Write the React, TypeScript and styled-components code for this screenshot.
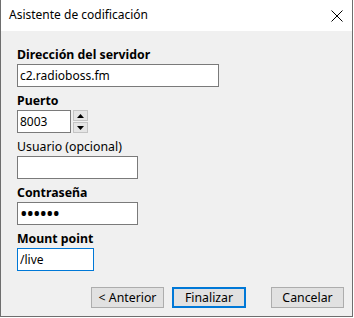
import React from "react";
import styled, { createGlobalStyle } from "styled-components";

const Global = createGlobalStyle`
  html, body { margin: 0; padding: 0; background: #ffffff; }
  body { font-family: "Noto Sans", "Open Sans", sans-serif; font-size: 12px; color: #000; }
  * { box-sizing: border-box; }
`;

const Window = styled.div`
  width: 353px;
  height: 317px;
  border: 1px solid #6e6e6e;
  border-top: none;
  background: #f0f0f0;
  display: flex;
  flex-direction: column;
`;

const TitleBar = styled.div`
  height: 31px;
  background: #ffffff;
  display: flex;
  align-items: center;
  justify-content: space-between;
  padding: 0 7px 0 8px;
`;

const Title = styled.span`
  font-size: 12px;
  color: #000;
  line-height: 16px;
  margin-top: -1px;
`;

const Close = styled.div`
  width: 14px;
  height: 14px;
  display: flex;
  align-items: center;
  justify-content: center;
  margin-right: 1px;
`;

const Body = styled.div`
  flex: 1;
  display: flex;
  flex-direction: column;
  padding: 16px 8px 0 16px;
`;

const Field = styled.div`
  display: flex;
  flex-direction: column;
  margin-bottom: 6px;
`;

const Label = styled.label<{ $bold?: boolean }>`
  font-weight: ${(p) => (p.$bold ? 700 : 400)};
  font-size: 12.3px;
  line-height: 16px;
  height: 16px;
  margin-bottom: 1px;
  white-space: nowrap;
`;

const Input = styled.input<{ $w: number; $focused?: boolean; $pw?: boolean }>`
  width: ${(p) => p.$w}px;
  height: 23px;
  border: 1px solid ${(p) => (p.$focused ? "#0078d7" : "#7a7a7a")};
  background: #fff;
  font-family: "Noto Sans", "Open Sans", sans-serif;
  font-size: ${(p) => (p.$pw ? "20px" : "12px")};
  letter-spacing: ${(p) => (p.$pw ? "-1px" : "0")};
  padding: 0 2px;
  margin: 0;
  outline: none;
  color: #000;
`;

const SpinRow = styled.div`
  display: flex;
  gap: 1px;
`;

const Spin = styled.div`
  display: flex;
  flex-direction: column;
  gap: 1px;
  margin-left: 1px;
`;

const SpinButton = styled.div`
  width: 15px;
  height: 11px;
  background: #e5e5e5;
  border: 1px solid #c4c4c4;
  display: flex;
  align-items: center;
  justify-content: center;
`;

const Buttons = styled.div`
  display: flex;
  justify-content: flex-end;
  margin-top: 10px;
`;

const Button = styled.button<{ $primary?: boolean; $gap: number }>`
  width: ${(p) => (p.$primary ? 74 : 73)}px;
  height: 21px;
  margin-left: ${(p) => p.$gap}px;
  background: #e1e1e1;
  border: ${(p) => (p.$primary ? "2px solid #0078d7" : "1px solid #adadad")};
  font-family: "Noto Sans", "Open Sans", sans-serif;
  font-size: 12.3px;
  color: #000;
  padding: 0;
  line-height: 16px;
`;

const Triangle = ({ up }: { up?: boolean }) => (
  <svg width="7" height="4" viewBox="0 0 7 4">
    <path d={up ? "M0 4 L3.5 0 L7 4 Z" : "M0 0 L3.5 4 L7 0 Z"} fill="#000" />
  </svg>
);

export default function App() {
  return (
    <>
      <Global />
      <Window>
        <TitleBar>
          <Title>Asistente de codificación</Title>
          <Close>
            <svg width="12" height="12" viewBox="0 0 12 12">
              <path d="M0.5 0.5 L11.5 11.5 M11.5 0.5 L0.5 11.5" stroke="#000" strokeWidth="1" />
            </svg>
          </Close>
        </TitleBar>
        <Body>
          <Field>
            <Label $bold>Dirección del servidor</Label>
            <Input $w={202} readOnly defaultValue="c2.radioboss.fm" />
          </Field>
          <Field>
            <Label $bold>Puerto</Label>
            <SpinRow>
              <Input $w={54} readOnly defaultValue="8003" />
              <Spin>
                <SpinButton><Triangle up /></SpinButton>
                <SpinButton><Triangle /></SpinButton>
              </Spin>
            </SpinRow>
          </Field>
          <Field>
            <Label>Usuario (opcional)</Label>
            <Input $w={121} readOnly defaultValue="" />
          </Field>
          <Field>
            <Label $bold>Contraseña</Label>
            <Input $w={121} $pw type="password" readOnly defaultValue="secret" />
          </Field>
          <Field>
            <Label $bold>Mount point</Label>
            <Input $w={77} $focused readOnly defaultValue="/live" />
          </Field>
          <Buttons>
            <Button $gap={0}>&lt; Anterior</Button>
            <Button $gap={8} $primary>Finalizar</Button>
            <Button $gap={25}>Cancelar</Button>
          </Buttons>
        </Body>
      </Window>
    </>
  );
}
